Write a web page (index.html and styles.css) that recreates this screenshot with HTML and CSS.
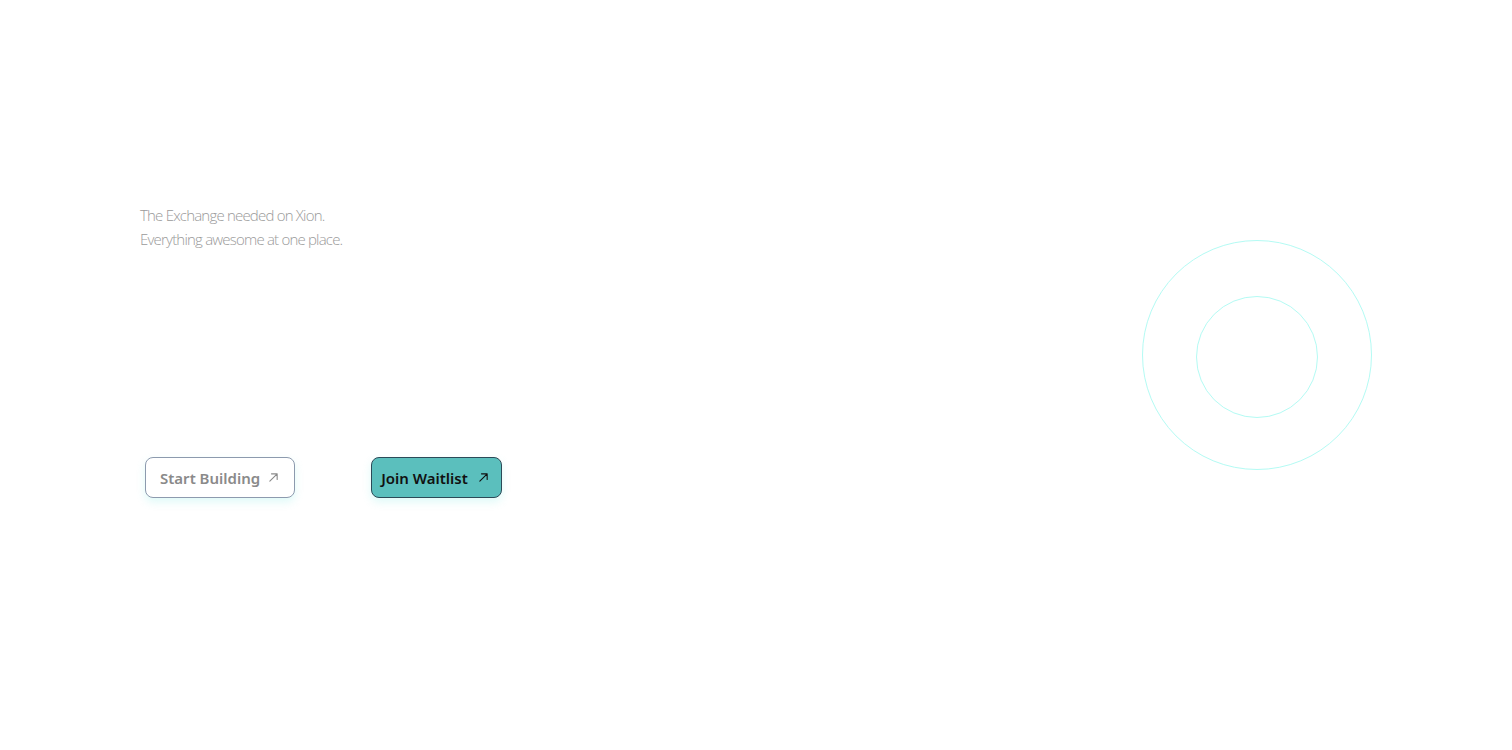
FILE: index.html
```html
<!DOCTYPE html>
<html lang="en">
<head>
<meta charset="utf-8">
<title>Xion Exchange</title>
<link rel="stylesheet" href="styles.css">
</head>
<body>
<main class="hero">
  <section class="hero-left">
    <p class="tagline">The Exchange needed on Xion.<br>Everything awesome at one place.</p>
    <div class="actions">
      <a class="btn btn-outline" href="#">Start Building
        <svg class="arrow" viewBox="0 0 12 12" width="11" height="11"><path d="M2 10 L10 2 M3.8 2 H10 V8.2" fill="none" stroke="currentColor" stroke-width="1.2" stroke-linecap="round" stroke-linejoin="round"/></svg>
      </a>
      <a class="btn btn-solid" href="#">Join Waitlist
        <svg class="arrow" viewBox="0 0 12 12" width="11" height="11"><path d="M2 10 L10 2 M3.8 2 H10 V8.2" fill="none" stroke="currentColor" stroke-width="1.2" stroke-linecap="round" stroke-linejoin="round"/></svg>
      </a>
    </div>
  </section>
  <section class="hero-right">
    <div class="ring-outer">
      <div class="ring-inner"></div>
    </div>
  </section>
</main>
</body>
</html>
```
FILE: styles.css
```css
html, body {
  margin: 0;
  padding: 0;
  background: #ffffff;
}
body {
  width: 1512px;
  height: 750px;
  overflow: hidden;
  font-family: "Noto Sans", "Open Sans", sans-serif;
}
.hero {
  display: flex;
  justify-content: space-between;
  padding: 0 140px;
  height: 750px;
  box-sizing: border-box;
}
.hero-left {
  display: flex;
  flex-direction: column;
  padding-top: 203px;
}
.tagline {
  margin: 0;
  font-family: "Open Sans", sans-serif;
  font-weight: 300;
  font-size: 15px;
  line-height: 24px;
  letter-spacing: -0.8px;
  color: #9a9a9a;
}
.actions {
  display: flex;
  gap: 76px;
  margin-top: 206px;
  margin-left: 5px;
}
.btn {
  display: inline-flex;
  align-items: center;
  gap: 8px;
  height: 41px;
  box-sizing: border-box;
  border-radius: 8px;
  font-family: "Noto Sans", sans-serif;
  font-size: 15px;
  font-weight: 600;
  text-decoration: none;
  box-shadow: 0 4px 8px rgba(110, 230, 225, 0.22);
}
.btn-outline {
  padding: 0 15px 0 14px;
  border: 1px solid #8d9aae;
  color: #8a8a8a;
  background: #ffffff;
}
.btn-solid {
  padding: 0 12px 0 9px;
  gap: 10px;
  border: 1px solid #2c4a58;
  color: #111111;
  background: #5bbfbd;
}
.btn-solid .arrow {
  margin-top: -1px;
}
.arrow {
  display: block;
}
.hero-right {
  padding-top: 240px;
}
.ring-outer {
  width: 230px;
  height: 230px;
  box-sizing: border-box;
  border: 1px solid #b4fbf4;
  border-radius: 50%;
  display: flex;
  align-items: center;
  justify-content: center;
}
.ring-inner {
  width: 122px;
  height: 122px;
  box-sizing: border-box;
  border: 1px solid #b4fbf4;
  border-radius: 50%;
  margin-top: 3px;
}
```
